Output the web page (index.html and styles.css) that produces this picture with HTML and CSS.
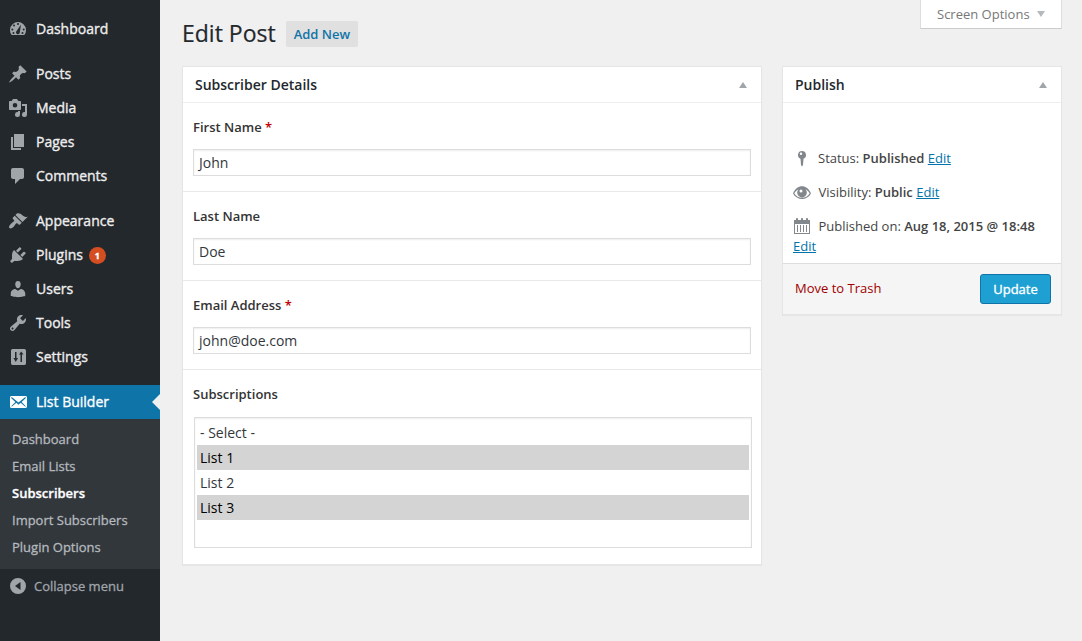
FILE: index.html
```html
<!DOCTYPE html>
<html lang="en">
<head>
<meta charset="utf-8">
<title>Edit Post</title>
<link rel="stylesheet" href="styles.css">
</head>
<body>
<div class="app">
  <nav class="sidebar">
    <ul class="menu">
      <li class="menu-item"><svg class="icon" viewBox="0 0 20 20"><path fill-rule="evenodd" d="M3.700 16h12.600A8 8 0 1 0 3.700 16zM10 4a1 1 0 1 1 0 2 1 1 0 0 1 0-2zM6 5.500a1 1 0 1 1 0 2 1 1 0 0 1 0-2zM4.300 9.500a1 1 0 1 1 0 2 1 1 0 0 1 0-2zM15.700 9.500a1 1 0 1 1 0 2 1 1 0 0 1 0-2zM5.500 13a1 1 0 1 1 0 2 1 1 0 0 1 0-2zM14.500 13a1 1 0 1 1 0 2 1 1 0 0 1 0-2zM13 5.500l-1.200 7.800a1.900 1.900 0 1 1-3-1.500z"/></svg>Dashboard</li>
      <li class="menu-item gap"><svg class="icon" viewBox="0 0 20 20"><path d="M10.440 3.020l1.820-1.820 6.360 6.350-1.830 1.820c-1.050-.68-2.480-.57-3.410.36l-.75.750c-.92.930-1.040 2.350-.35 3.410l-1.830 1.820-2.410-2.410-2.800 2.790c-.42.420-3.380 2.710-3.800 2.290s1.860-3.390 2.280-3.810l2.790-2.790L4.100 9.360l1.830-1.820c1.050.69 2.480.57 3.400-.36l.75-.75c.93-.92 1.050-2.350.36-3.410z"/></svg>Posts</li>
      <li class="menu-item"><svg class="icon" viewBox="0 0 20 20"><path fill-rule="evenodd" d="M13 11V4c0-.55-.45-1-1-1h-1.670L9 1H5L3.670 3H2c-.55 0-1 .45-1 1v7c0 .55.450 1 1 1h10c.55 0 1-.45 1-1zM7 5a2.300 2.300 0 1 1 0 4.600A2.300 2.300 0 0 1 7 5z"/><path d="M14 6h5v10.500a2.500 2.500 0 1 1-2-2.450V8h-3zM12 13v3.500a2.500 2.500 0 1 1-2-2.450V13z"/></svg>Media</li>
      <li class="menu-item"><svg class="icon" viewBox="0 0 20 20"><path d="M6 2h10v13H6zM3 5h2v11h8v2H3z"/></svg>Pages</li>
      <li class="menu-item"><svg class="icon" viewBox="0 0 20 20"><path d="M5 2h9c1.100 0 2 .9 2 2v7c0 1.100-.9 2-2 2h-2l-5 5v-5H5c-1.100 0-2-.9-2-2V4c0-1.100.9-2 2-2z"/></svg>Comments</li>
      <li class="menu-item gap"><svg class="icon" viewBox="0 0 20 20"><path d="M14.480 11.060L7.410 3.990l1.500-1.500c.5-.56 2.300-.47 3.510.32 1.210.8 1.430 1.280 2.910 2.100 1.180.64 2.450 1.260 4.450.85zm-.71.710L6.700 4.700 4.930 6.470c-.39.390-.39 1.020 0 1.410l1.060 1.060c.39.390.39 1.030 0 1.420-.6.600-1.430 1.110-2.210 1.690-.35.260-.7.530-1.010.84C1.430 14.230.400 16.080 1.400 17.070c.990 1 2.840-.03 4.180-1.360.31-.31.580-.66.850-1.020.57-.78 1.080-1.610 1.690-2.210.39-.39 1.020-.39 1.410 0l1.060 1.060c.39.390 1.020.39 1.410 0z"/></svg>Appearance</li>
      <li class="menu-item"><svg class="icon" viewBox="0 0 20 20"><path d="M13.110 4.360L9.870 7.600 8 5.730l3.240-3.240c.35-.34 1.050-.2 1.560.32.520.51.660 1.210.31 1.550zm-8 1.770l.91-1.120 9.010 9.010-1.190.84c-.71.710-2.630 1.160-3.820 1.160H6.140L4.900 17.260c-.59.590-1.540.59-2.120 0-.59-.58-.59-1.530 0-2.120l1.240-1.240v-3.880c0-1.130.4-3.190 1.090-3.890zm7.260 3.970l3.240-3.240c.34-.35 1.040-.21 1.550.31.520.51.660 1.210.31 1.550l-3.240 3.250z"/></svg>Plugins<span class="badge">1</span></li>
      <li class="menu-item"><svg class="icon" viewBox="0 0 20 20"><path d="M10 9.250c-2.270 0-2.730-3.440-2.730-3.440C7 4.020 7.820 2 9.970 2c2.160 0 2.980 2.020 2.710 3.810 0 0-.41 3.440-2.680 3.440zm0 2.570L12.720 10c2.390 0 4.520 2.330 4.520 4.530v2.490s-3.650 1.130-7.240 1.130c-3.650 0-7.240-1.130-7.240-1.130v-2.490c0-2.250 1.940-4.480 4.470-4.480z"/></svg>Users</li>
      <li class="menu-item"><svg class="icon" viewBox="0 0 20 20"><path fill-rule="evenodd" d="M16.680 9.770c-1.340 1.340-3.300 1.670-4.950.99l-5.410 6.520c-.99.990-2.590.99-3.580 0s-.99-2.590 0-3.570l6.520-5.420c-.68-1.650-.35-3.610.99-4.950 1.280-1.280 3.120-1.620 4.720-1.060l-2.890 2.890 2.820 2.820 2.860-2.870c.53 1.580.18 3.390-1.080 4.650zM3.810 16.210c.4.390 1.040.39 1.430 0 .4-.4.400-1.040 0-1.430-.39-.4-1.030-.4-1.430 0-.39.390-.39 1.030 0 1.430z"/></svg>Tools</li>
      <li class="menu-item"><svg class="icon" viewBox="0 0 20 20"><path fill-rule="evenodd" d="M18 16V4c0-1-.5-2-1.500-2h-12C3.500 2 3 2.800 3 4v12c0 1.100.5 2 1.500 2h12c1 0 1.500-.9 1.500-2zM7 5h1.500v6H10l-2.250 4L5.500 11H7zm6.200-.6l2.300 3.100H14V15h-1.500V7.500H11z"/></svg>Settings</li>
      <li class="menu-item gap current"><svg class="icon" viewBox="0 0 20 20"><path d="M19 14.500v-9c0-.83-.67-1.500-1.500-1.500H3.490c-.83 0-1.500.67-1.500 1.500v9c0 .83.670 1.500 1.500 1.500H17.500c.83 0 1.500-.67 1.500-1.500zm-1.310-9.110c.33.330.150.670-.03.840L13.600 9.950l3.900 4.060c.12.140.2.360.06.510-.13.160-.43.150-.56.050l-4.370-3.730-2.140 1.950-2.130-1.950-4.370 3.730c-.13.100-.43.110-.56-.05-.14-.15-.06-.37.060-.51l3.900-4.060-4.060-3.720c-.18-.17-.36-.51-.03-.84s.67-.17.950.07l6.240 5.040 6.250-5.040c.28-.24.620-.4.950-.07z"/></svg>List Builder</li>
    </ul>
    <ul class="submenu">
      <li>Dashboard</li>
      <li>Email Lists</li>
      <li class="active">Subscribers</li>
      <li>Import Subscribers</li>
      <li>Plugin Options</li>
    </ul>
    <div class="collapse"><svg class="icon" viewBox="0 0 20 20"><path fill-rule="evenodd" d="M10 2a8 8 0 1 1 0 16 8 8 0 0 1 0-16zM12.500 6v8L7 10z"/></svg>Collapse menu</div>
  </nav>
  <main class="content">
    <header class="top">
      <h1>Edit Post</h1>
      <a class="add-new">Add New</a>
      <div class="screen-options">Screen Options<i class="arrow down"></i></div>
    </header>
    <div class="columns">
      <section class="box details">
        <h3 class="box-title">Subscriber Details<i class="arrow up"></i></h3>
        <div class="field"><label>First Name <b class="required">*</b></label><div class="input">John</div></div>
        <div class="field"><label>Last Name</label><div class="input">Doe</div></div>
        <div class="field"><label>Email Address <b class="required">*</b></label><div class="input">john@doe.com</div></div>
        <div class="field"><label>Subscriptions</label>
          <ul class="listbox"><li>- Select -</li><li class="selected">List 1</li><li>List 2</li><li class="selected">List 3</li></ul>
        </div>
      </section>
      <section class="box publish">
        <h3 class="box-title">Publish<i class="arrow up"></i></h3>
        <div class="publish-info">
          <p><svg class="meta" viewBox="0 0 18 18"><path fill-rule="evenodd" d="M9 1a4 4 0 0 1 1.500 7.700L10 15l-1 1.500L8 15l-.5-6.300A4 4 0 0 1 9 1zM8 2.600a1.200 1.200 0 1 0 0 2.400 1.200 1.200 0 0 0 0-2.400z"/></svg>Status: <b>Published</b> <a>Edit</a></p>
          <p><svg class="meta wide" viewBox="0 0 18 18"><path fill-rule="evenodd" d="M0 9.500C4-.1 14-.1 18 9.500 14 16.800 4 16.800 0 9.500zM1.300 9.500c3.500 5.700 11.900 5.700 15.400 0-1.100-1.900-2.500-3.300-4.200-4.200a4.800 4.800 0 1 1-7 0C3.800 6.200 2.400 7.600 1.300 9.500zM8 5.600a1.500 1.500 0 1 0 0 3 1.500 1.500 0 0 0 0-3z"/></svg>Visibility: <b>Public</b> <a>Edit</a></p>
          <p><svg class="meta wide" viewBox="0 0 18 18"><path fill-rule="evenodd" d="M1 2h2V1c0-1.300 2-1.300 2 0v1h3V1c0-1.300 2-1.300 2 0v1h3V1c0-1.300 2-1.300 2 0v1h2v14H1zM2 6v9h14V6zM4 7h1v7H4zM7 7h1v7H7zM10 7h1v7h-1zM13 7h1v7h-1z"/></svg>Published on: <b>Aug 18, 2015 @ 18:48</b> <a>Edit</a></p>
        </div>
        <footer class="actions"><a class="trash">Move to Trash</a><span class="button">Update</span></footer>
      </section>
    </div>
  </main>
</div>
</body>
</html>
```
FILE: styles.css
```css
* { box-sizing: border-box; }
body {
  margin: 0;
  background: #f0f0f0;
  color: #444;
  font: 13px/20px "Open Sans", sans-serif;
}
ul { list-style: none; margin: 0; padding: 0; }
h1, h3, p { margin: 0; }
.app { display: flex; height: 641px; overflow: hidden; }

.sidebar { width: 160px; flex: none; background: #23282d; padding-top: 12px; color: #eee; }
.menu-item {
  display: flex;
  align-items: center;
  height: 34px;
  padding-left: 8px;
  font-size: 14px;
  -webkit-text-stroke: 0.35px;
}
.gap { margin-top: 11px; }
.icon { width: 20px; height: 20px; margin-right: 8px; fill: #a0a5aa; flex: none; -webkit-text-stroke: 0; }
.badge {
  width: 17px;
  height: 17px;
  margin-left: 6px;
  border-radius: 50%;
  background: #d54e21;
  color: #fff;
  font-size: 9px;
  font-weight: 700;
  line-height: 17px;
  text-align: center;
}
.current { position: relative; background: #0f74a8; color: #fff; }
.current .icon { fill: #fff; }
.current::after {
  content: "";
  position: absolute;
  right: 0;
  top: 9px;
  border: 8px solid transparent;
  border-left: 0;
  border-right-color: #f0f0f0;
}
.submenu { background: #32373c; padding: 7px 12px 8px; color: #b4b9be; -webkit-text-stroke: 0.3px; }
.submenu li { height: 27px; line-height: 27px; }
.submenu .active { color: #fff; font-weight: 600; }
.collapse { display: flex; align-items: center; height: 34px; padding-left: 8px; color: #a0a5aa; -webkit-text-stroke: 0.3px; }
.collapse .icon { margin-right: 6px; }

.content { flex: 1; padding: 0 20px 0 22px; }
.top { display: flex; height: 66px; }
h1 { padding-top: 19px; font-size: 23px; font-weight: 400; line-height: 29px; color: #23282d; -webkit-text-stroke: 0.2px; }
.add-new {
  height: 26px;
  margin: 21px 0 0 10px;
  padding: 0 8px;
  border-radius: 2px;
  background: #e0e0e0;
  color: #0f74a8;
  font-weight: 600;
  line-height: 26px;
}
.screen-options {
  display: flex;
  align-items: center;
  width: 142px;
  height: 29px;
  margin-left: auto;
  padding-left: 16px;
  border: 1px solid #ddd;
  border-top: 0;
  border-bottom-color: #ccc;
  background: #fff;
  color: #777;
}
.arrow { width: 0; height: 0; border: 4px solid transparent; }
.down { margin-left: 7px; border-top: 6px solid #b4b9be; border-bottom: 0; }
.up { border-bottom: 6px solid #a0a5aa; border-top: 0; }

.columns { display: flex; align-items: flex-start; justify-content: space-between; }
.box { background: #fff; border: 1px solid #e5e5e5; box-shadow: 0 1px 1px rgba(0, 0, 0, 0.04); }
.details { width: 580px; height: 499px; }
.publish { width: 280px; height: 249px; }
.box-title {
  display: flex;
  align-items: center;
  justify-content: space-between;
  height: 36px;
  padding: 0 14px 0 12px;
  border-bottom: 1px solid #eee;
  color: #23282d;
  font-size: 14px;
  font-weight: 600;
}
.field { height: 89px; padding: 14px 10px 0; border-bottom: 1px solid #e9e9e9; color: #333; }
.field:last-child { height: auto; border: 0; }
label { display: block; font-weight: 600; }
.required { color: #c00000; font-weight: 600; }
.input {
  height: 27px;
  margin-top: 12px;
  padding-left: 5px;
  border: 1px solid #ddd;
  box-shadow: inset 0 1px 2px rgba(0, 0, 0, 0.07);
  color: #32373c;
  font-size: 14px;
  line-height: 25px;
}
.listbox {
  width: 558px;
  height: 131px;
  margin: 13px 0 0 1px;
  padding: 2px;
  border: 1px solid #ddd;
  box-shadow: inset 0 1px 2px rgba(0, 0, 0, 0.07);
  color: #32373c;
  font-size: 14px;
}
.listbox li { height: 25px; padding-left: 3px; line-height: 25px; }
.listbox .selected { background: #d4d4d4; color: #000; }

.publish-info { height: 161px; padding: 45px 10px 0; border-bottom: 1px solid #ddd; }
.publish-info p { margin-bottom: 14px; }
.publish-info b { font-weight: 600; }
.publish-info a { color: #0073aa; text-decoration: underline; }
.meta { width: 18px; height: 18px; margin-right: 7px; vertical-align: -5px; fill: #82878c; }
.meta.wide { margin-right: 7.5px; }
.actions { display: flex; justify-content: space-between; height: 50px; padding: 10px 10px 0 12px; background: #f5f5f5; }
.trash { padding-top: 4px; color: #a00000; }
.button {
  width: 71px;
  height: 30px;
  border: 1px solid #0f74a8;
  border-radius: 3px;
  background: #1ea1d2;
  color: #fff;
  line-height: 28px;
  text-align: center;
  -webkit-text-stroke: 0.35px;
}
```
